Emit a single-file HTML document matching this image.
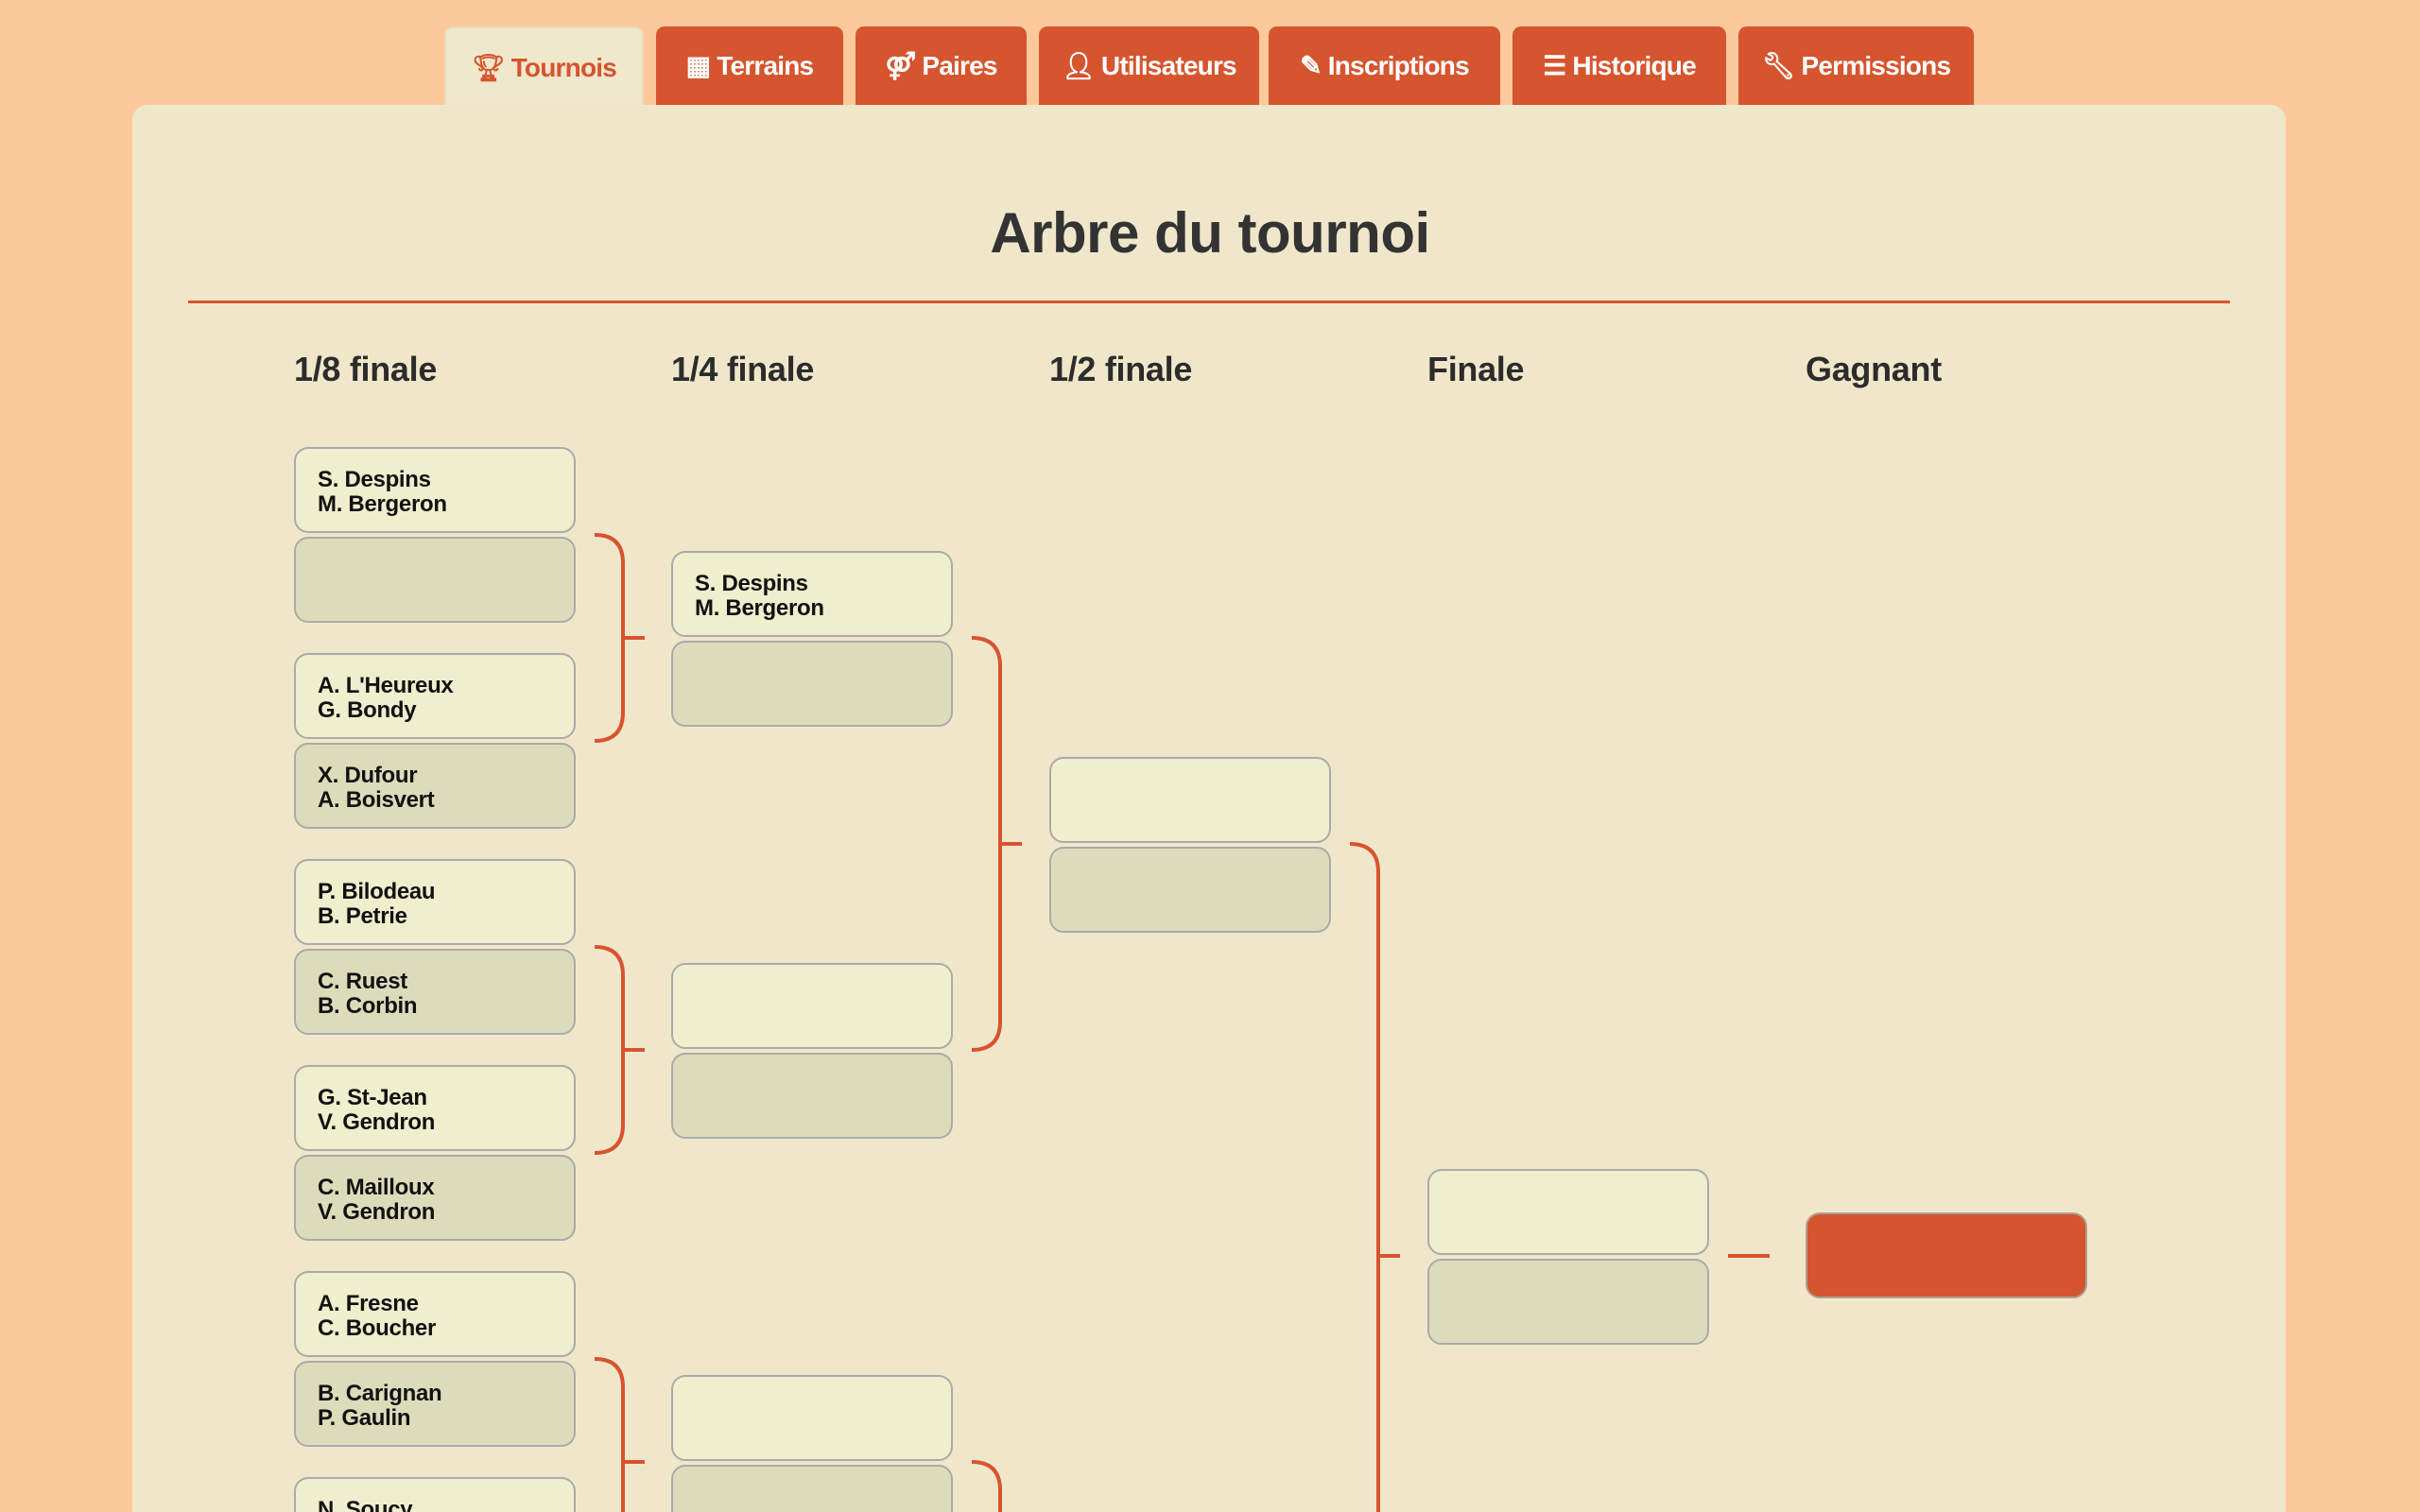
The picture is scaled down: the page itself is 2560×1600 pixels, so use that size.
<!DOCTYPE html>
<html><head><meta charset="utf-8">
<style>
*{margin:0;padding:0;box-sizing:border-box}
html{width:2560px;height:1600px;overflow:hidden}
body{width:2560px;height:1600px;overflow:hidden;background:#fcc99b;font-family:"Liberation Sans",sans-serif;position:relative}
.tab{position:absolute;top:28px;height:83px;background:#d5552e;color:#fff;border-radius:9px 9px 0 0;font-size:28px;font-weight:bold;line-height:83px;text-align:center;letter-spacing:-0.8px}
.tab.act{background:#f0e8cc;color:#d5552e;border:2px solid #e6dcc0;border-bottom:none}
.panel{position:absolute;left:140px;top:111px;width:2278px;height:1489px;background:#f0e7cb;border-radius:16px 16px 0 0}
h1{position:absolute;left:0;width:2560px;top:212px;text-align:center;font-size:60px;color:#333;font-weight:bold;letter-spacing:-0.5px}
.rule{position:absolute;left:199px;top:318px;width:2160px;height:3px;background:#d9532f}
.hd{position:absolute;top:370px;font-size:36px;font-weight:bold;color:#2c2c2c;letter-spacing:-0.3px}
.b{position:absolute;width:298px;height:91px;border:2px solid #aaa;border-radius:15px;background:#efeecd;font-size:24px;font-weight:bold;color:#111;padding:20px 0 0 23px;line-height:26px;letter-spacing:-0.3px}
.d{background:#dcdcbb}
.w{background:#d4552e;border-color:#b0a090}
svg{position:absolute;left:0;top:0}
</style></head><body>
<div class="tab act" style="left:470px;width:211px">🏆︎ Tournois</div>
<div class="tab" style="left:694px;width:198px">▦ Terrains</div>
<div class="tab" style="left:905px;width:181px">⚤ Paires</div>
<div class="tab" style="left:1099px;width:233px">👤︎ Utilisateurs</div>
<div class="tab" style="left:1342px;width:245px">✎ Inscriptions</div>
<div class="tab" style="left:1600px;width:226px">☰ Historique</div>
<div class="tab" style="left:1839px;width:249px">🔧︎ Permissions</div>
<div class="panel"></div>
<h1>Arbre du tournoi</h1>
<div class="rule"></div>
<div class="hd" style="left:311px">1/8 finale</div>
<div class="hd" style="left:710px">1/4 finale</div>
<div class="hd" style="left:1110px">1/2 finale</div>
<div class="hd" style="left:1510px">Finale</div>
<div class="hd" style="left:1910px">Gagnant</div>

<div class="b" style="left:311px;top:473px">S. Despins<br>M. Bergeron</div>
<div class="b d" style="left:311px;top:568px"></div>
<div class="b" style="left:311px;top:691px">A. L'Heureux<br>G. Bondy</div>
<div class="b d" style="left:311px;top:786px">X. Dufour<br>A. Boisvert</div>
<div class="b" style="left:311px;top:909px">P. Bilodeau<br>B. Petrie</div>
<div class="b d" style="left:311px;top:1004px">C. Ruest<br>B. Corbin</div>
<div class="b" style="left:311px;top:1127px">G. St-Jean<br>V. Gendron</div>
<div class="b d" style="left:311px;top:1222px">C. Mailloux<br>V. Gendron</div>
<div class="b" style="left:311px;top:1345px">A. Fresne<br>C. Boucher</div>
<div class="b d" style="left:311px;top:1440px">B. Carignan<br>P. Gaulin</div>
<div class="b" style="left:311px;top:1563px">N. Soucy<br></div>

<div class="b" style="left:710px;top:583px">S. Despins<br>M. Bergeron</div>
<div class="b d" style="left:710px;top:678px"></div>
<div class="b" style="left:710px;top:1019px"></div>
<div class="b d" style="left:710px;top:1114px"></div>
<div class="b" style="left:710px;top:1455px"></div>
<div class="b d" style="left:710px;top:1550px"></div>

<div class="b" style="left:1110px;top:801px"></div>
<div class="b d" style="left:1110px;top:896px"></div>

<div class="b" style="left:1510px;top:1237px"></div>
<div class="b d" style="left:1510px;top:1332px"></div>

<div class="b w" style="left:1910px;top:1283px"></div>

<svg width="2560" height="1600" fill="none" stroke="#d9532f" stroke-width="4">
<path d="M629 566 Q659 566 659 596 L659 754 Q659 784 629 784 M659 675 L682 675"/>
<path d="M629 1002 Q659 1002 659 1032 L659 1190 Q659 1220 629 1220 M659 1111 L682 1111"/>
<path d="M629 1438 Q659 1438 659 1468 L659 1626 Q659 1656 629 1656 M659 1547 L682 1547"/>
<path d="M1028 675 Q1058 675 1058 705 L1058 1081 Q1058 1111 1028 1111 M1058 893 L1081 893"/>
<path d="M1028 1547 Q1058 1547 1058 1577 L1058 1700"/>
<path d="M1428 893 Q1458 893 1458 923 L1458 1735 Q1458 1765 1428 1765 M1458 1329 L1481 1329"/>
<path d="M1828 1329 L1872 1329"/>
</svg>
</body></html>
